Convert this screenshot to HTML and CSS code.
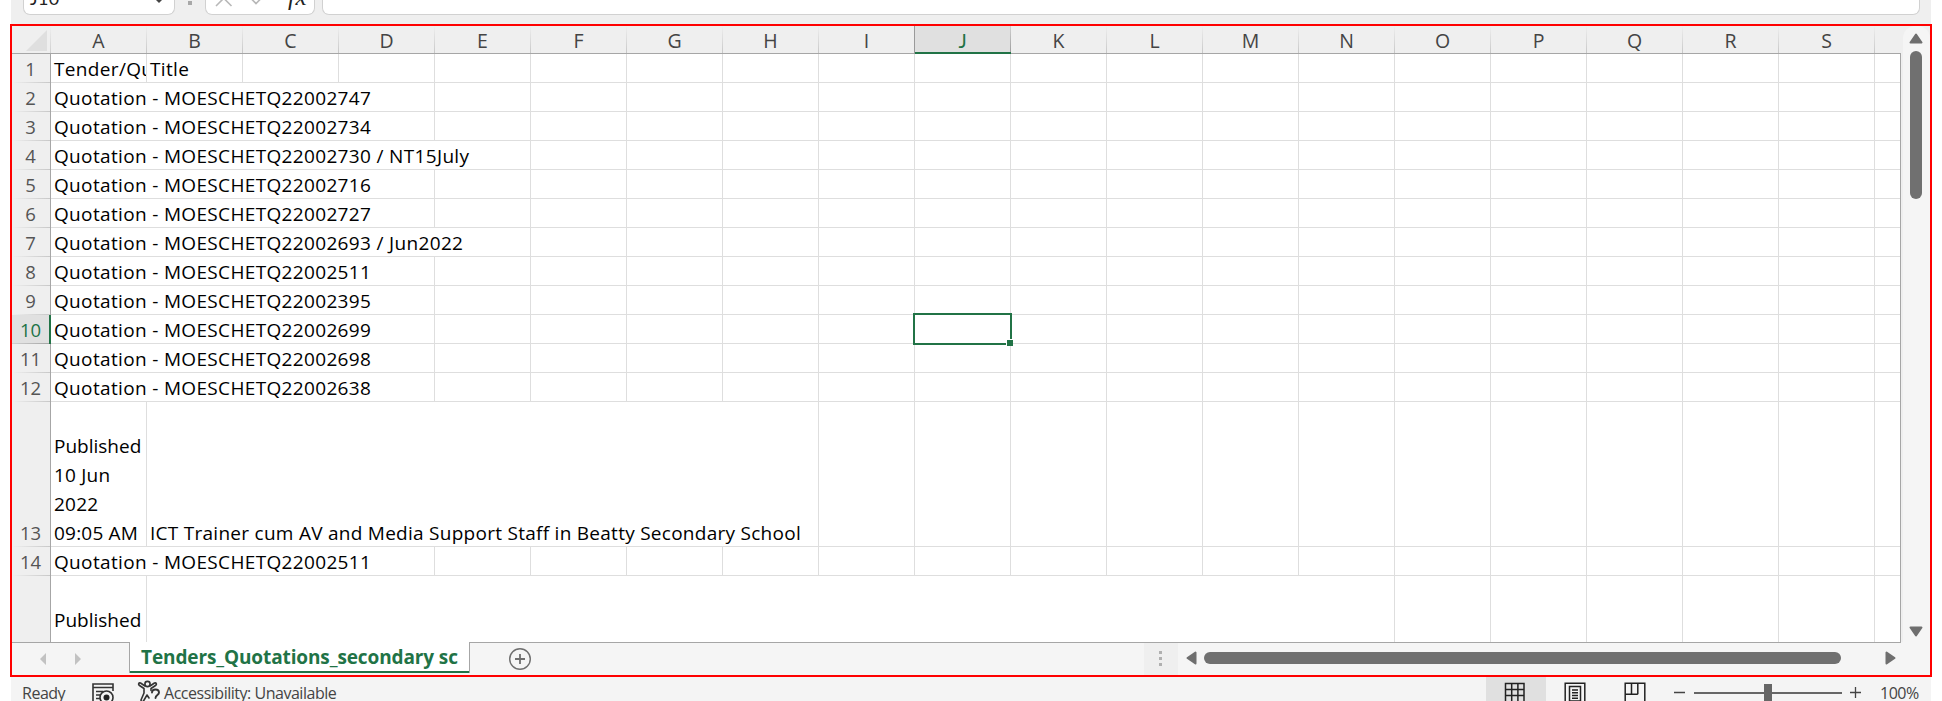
FILE: index.html
```
<!DOCTYPE html>
<html lang="en">
<head>
<meta charset="utf-8">
<title>Tenders_Quotations_secondary sc</title>
<link rel="stylesheet" href="styles.css">
</head>
<body>
<div class="toolbar">
  <div class="box namebox"><span>J10</span><svg class="caret" width="10" height="6" viewBox="0 0 10 6"><path d="M0 0h10L5 5z" fill="#444"/></svg></div>
  <div class="sep"></div>
  <div class="box fxbox">
    <svg width="110" height="14" viewBox="0 0 110 14"><path d="M10 6L26 -10M25.500 6L9.500 -10M43.500 -3l6.500 6.500l10 -10" fill="none" stroke="#b8b8b8" stroke-width="1.600"/></svg>
    <span class="fx">fx</span>
  </div>
  <div class="box formula"></div>
</div>

<div class="frame">
  <div class="main">
    <div class="sheet">
      <div class="row head">
        <div class="corner"><svg width="21" height="21" viewBox="0 0 21 21"><path d="M21 0v21H0z" fill="#dfdfdf"/></svg></div>
        <div class="col">A</div><div class="col">B</div><div class="col">C</div><div class="col">D</div><div class="col">E</div><div class="col">F</div><div class="col">G</div><div class="col">H</div><div class="col before">I</div><div class="col active">J</div><div class="col">K</div><div class="col">L</div><div class="col">M</div><div class="col">N</div><div class="col">O</div><div class="col">P</div><div class="col">Q</div><div class="col">R</div><div class="col">S</div>
      </div>
      <div class="body">
        <div class="row"><div class="num">1</div><div class="cell">Tender/Qu</div><div class="cell b">Title</div><div class="rest"></div></div>
        <div class="row"><div class="num">2</div><div class="cell s4">Quotation - MOESCHETQ22002747</div><div class="rest"></div></div>
        <div class="row"><div class="num">3</div><div class="cell s4">Quotation - MOESCHETQ22002734</div><div class="rest"></div></div>
        <div class="row"><div class="num">4</div><div class="cell s5">Quotation - MOESCHETQ22002730 / NT15July</div><div class="rest"></div></div>
        <div class="row"><div class="num">5</div><div class="cell s4">Quotation - MOESCHETQ22002716</div><div class="rest"></div></div>
        <div class="row"><div class="num">6</div><div class="cell s4">Quotation - MOESCHETQ22002727</div><div class="rest"></div></div>
        <div class="row"><div class="num">7</div><div class="cell s5">Quotation - MOESCHETQ22002693 / Jun2022</div><div class="rest"></div></div>
        <div class="row"><div class="num">8</div><div class="cell s4">Quotation - MOESCHETQ22002511</div><div class="rest"></div></div>
        <div class="row"><div class="num">9</div><div class="cell s4">Quotation - MOESCHETQ22002395</div><div class="rest"></div></div>
        <div class="row"><div class="num active">10</div><div class="cell s4">Quotation - MOESCHETQ22002699</div><div class="rest"></div></div>
        <div class="row"><div class="num">11</div><div class="cell s4">Quotation - MOESCHETQ22002698</div><div class="rest"></div></div>
        <div class="row"><div class="num">12</div><div class="cell s4">Quotation - MOESCHETQ22002638</div><div class="rest"></div></div>
        <div class="row tall"><div class="num">13</div><div class="cell wrap"><span class="pub">Published</span><br>10 Jun<br>2022<br>09:05 AM</div><div class="cell b s7 long">ICT Trainer cum AV and Media Support Staff in Beatty Secondary School</div><div class="rest"></div></div>
        <div class="row"><div class="num">14</div><div class="cell s4">Quotation - MOESCHETQ22002511</div><div class="rest"></div></div>
        <div class="row last"><div class="num"></div><div class="cell wrap"><br><span class="pub">Published</span></div><div class="cell s13"></div><div class="rest"></div></div>
        <div class="selection"><i></i></div>
      </div>
    </div>
    <div class="vscroll">
      <svg width="14" height="11" viewBox="0 0 14 11"><path d="M7 1.500L12.500 9.500H1.500z" fill="#6f6f6f" stroke="#6f6f6f" stroke-width="2" stroke-linejoin="round"/></svg>
      <div class="vthumb"></div>
      <svg width="14" height="11" viewBox="0 0 14 11"><path d="M7 9.500L12.500 1.500H1.500z" fill="#6f6f6f" stroke="#6f6f6f" stroke-width="2" stroke-linejoin="round"/></svg>
    </div>
  </div>
  <div class="tabs">
    <div class="nav"><svg width="42" height="12" viewBox="0 0 42 12"><path d="M6 0v12L0 6zM35 0v12l6 -6z" fill="#c2c2c2"/></svg></div>
    <div class="tab">Tenders_Quotations_secondary sc</div>
    <div class="fill"><svg width="24" height="24" viewBox="0 0 24 24" fill="none" stroke="#6f6f6f"><circle cx="12" cy="12" r="10.300" stroke-width="1.400"/><path d="M12 7v10M7 12h10" stroke-width="1.800"/></svg></div>
    <div class="split"><i></i><i></i><i></i></div>
    <div class="hscroll">
      <svg width="11" height="14" viewBox="0 0 11 14"><path d="M1.500 7L9.500 1.500v11z" fill="#6f6f6f" stroke="#6f6f6f" stroke-width="2" stroke-linejoin="round"/></svg>
      <div class="hthumb"></div>
      <svg width="11" height="14" viewBox="0 0 11 14"><path d="M9.500 7L1.500 1.500v11z" fill="#6f6f6f" stroke="#6f6f6f" stroke-width="2" stroke-linejoin="round"/></svg>
    </div>
  </div>
</div>

<div class="status">
  <span class="ready">Ready</span>
  <svg class="macro" width="24" height="24" viewBox="0 0 24 24" fill="none" stroke="#333" stroke-width="1.600"><path d="M9 22H2V2h20v7M2 5.500h20M5 9.500h7M5 13h4M5 16.500h4"/><circle cx="15.500" cy="15.500" r="6.500"/><circle cx="15.500" cy="15.500" r="3" fill="#222" stroke="none"/></svg>
  <svg class="acc" width="24" height="24" viewBox="0 0 24 24" fill="none" stroke="#333" stroke-width="1.600" stroke-linejoin="round" stroke-linecap="round"><circle cx="10.500" cy="4" r="2.600"/><path d="M8 6L3.500 3C1.500 2.500 1 4.500 2.500 5.500L7 8.500V13L4 20c0 2 2 2 2.500 1L10 15l2 3M13 6l4.500 -3c2 -.5 2.500 1.500 1 2.500L14 8.500v2"/><path d="M15 12.500c0 -4 7 -4 7 0c0 2.500 -3.500 2.500 -3.500 5.500" stroke-width="1.900"/></svg>
  <span class="acctext">Accessibility: Unavailable</span>
  <div class="view on"><svg width="22" height="22" viewBox="0 0 22 22" fill="none" stroke="#222" stroke-width="1.500"><path d="M1.500 1.500h18.500v19H1.500zM7.700 1.500v19M13.900 1.500v19M1.500 7.500h18.500M1.500 13.500h18.500"/></svg></div>
  <div class="view"><svg width="22" height="22" viewBox="0 0 22 22" fill="none" stroke="#222" stroke-width="1.500"><path d="M1.200 1.200h19.600v21H1.200zM5.500 4.500h11v14.500h-11zM8 8h6M8 10.800h6M8 13.600h6M8 16.200h6"/></svg></div>
  <div class="view"><svg width="22" height="22" viewBox="0 0 22 22" fill="none" stroke="#222" stroke-width="1.500"><path d="M1.200 1.200h19.600v21H1.200zM7.500 1.200v11M13.800 1.200v11M1.200 12.200h12.600"/></svg></div>
  <svg class="zoom" width="190" height="24" viewBox="0 0 190 24"><path d="M1 15.500h11M177 15.500h11M182.500 10v11" stroke="#444" stroke-width="1.300"/><path d="M21 16h148" stroke="#666" stroke-width="2"/><path d="M91 7h8v17h-8z" fill="#666"/></svg>
  <span class="pct">100%</span>
</div>
</body>
</html>
```
FILE: styles.css
```
* { box-sizing: border-box; }
body {
  margin: 0;
  width: 1942px;
  height: 701px;
  overflow: hidden;
  background: #fff;
  font-family: "Open Sans", "Noto Sans", sans-serif;
  display: flex;
  flex-direction: column;
}
svg { display: block; flex: none; }

.toolbar {
  flex: none;
  display: flex;
  height: 24px;
  margin: 0 11px;
  padding-left: 12px;
  background: #efefef;
}
.box {
  position: relative;
  height: 15px;
  background: #fff;
  border: 1px solid #d1d1d1;
  border-top: 0;
  border-radius: 0 0 7px 7px;
  overflow: hidden;
}
.namebox { width: 152px; display: flex; justify-content: space-between; padding: 0 10px 0 6px; }
.namebox span { margin-top: -14px; font: 18px/25px Lato, sans-serif; letter-spacing: 0.3px; color: #222; }
.caret { margin-top: -2px; }
.sep { width: 4px; height: 4px; margin: 1px 13px 0 13px; background: #a8a8a8; }
.fxbox { width: 110px; }
.fx {
  position: absolute;
  left: 82px;
  top: -18px;
  font: italic 25px/30px "Liberation Serif", serif;
  letter-spacing: 0.5px;
  color: #222;
}
.formula { width: 1598px; margin-left: 7px; }

.frame {
  flex: none;
  width: 1922px;
  height: 653px;
  margin-left: 10px;
  border: 2px solid #f00;
  background: #efefef;
  display: flex;
  flex-direction: column;
}
.main { display: flex; height: 616px; }
.sheet { width: 1889px; }
.row { display: flex; height: 29px; }
.head { height: 28px; border-bottom: 1px solid #a6a6a6; }
.corner { width: 39px; padding: 4px 0 0 14px; flex: none; background: linear-gradient(#efefef, #cfcfcf) right / 1px 100% no-repeat; }
.col {
  width: 96px;
  height: 27px;
  flex: none;
  padding-right: 1px;
  text-align: center;
  font-size: 19.5px;
  line-height: 30px;
  color: #444;
  background: linear-gradient(#efefef, #c8c8c8) right / 1px 100% no-repeat;
}
.col.before { background-image: linear-gradient(#d0d0d0, #9a9a9a); }
.col.active {
  height: 28px;
  font-family: Lato, sans-serif;
  color: #217346;
  background: linear-gradient(#d0d0d0, #9a9a9a) right / 1px 100% no-repeat, #e0e0e0;
  box-shadow: inset 0 -2px #217346, -1px 0 #9a9a9a;
}

.body {
  position: relative;
  height: 588px;
  background: #fff;
  border-right: 1px solid #a6a6a6;
}
.num {
  width: 39px;
  flex: none;
  padding-right: 1px;
  display: flex;
  justify-content: center;
  align-items: flex-end;
  font-size: 18.5px;
  line-height: 28px;
  color: #555;
  border-right: 1px solid #a6a6a6;
  background: linear-gradient(90deg, #efefef, #c8c8c8) bottom / 100% 1px no-repeat, #efefef;
}
.num.active {
  color: #217346;
  border-right: 2px solid #217346;
  padding-right: 0;
  background: linear-gradient(90deg, #d0d0d0, #a6a6a6) bottom / 100% 1px no-repeat, #e0e0e0;
}
.cell {
  width: 96px;
  flex: none;
  padding: 1px 0 0 3px;
  overflow: hidden;
  white-space: nowrap;
  font-size: 19px;
  line-height: 29px;
  letter-spacing: 0.34px;
  color: #000;
  border-right: 1px solid #dedede;
  border-bottom: 1px solid #dedede;
}
.s4 { width: 384px; }
.s5 { width: 480px; }
.s7 { width: 672px; }
.s13 { width: 1248px; }
.rest {
  flex: 1;
  border-bottom: 1px solid #dedede;
  background: repeating-linear-gradient(90deg, transparent 0 95px, #dedede 95px 96px);
}
.tall { height: 145px; }
.tall .wrap { padding-top: 30px; letter-spacing: 0.2px; }
.wrap .pub { letter-spacing: 0; }
.tall .long { padding-top: 117px; letter-spacing: 0.27px; }
.last { height: 66px; }
.last > * { border-bottom: 0; }
.last .num { background: #efefef; }
.selection {
  position: absolute;
  left: 901px;
  top: 259px;
  width: 99px;
  height: 32px;
  border: 2px solid #217346;
}
.selection i {
  position: absolute;
  right: -3px;
  bottom: -3px;
  width: 7px;
  height: 7px;
  background: #217346;
  border: 1px solid #fff;
  border-right: 0;
  border-bottom: 0;
}

.vscroll {
  width: 27px;
  margin-left: 2px;
  padding: 7px 1px 4px 0;
  display: flex;
  flex-direction: column;
  align-items: center;
  background: #f5f5f5;
  border-radius: 12px 12px 0 0;
}
.vthumb { width: 12px; height: 148px; margin: 7px 0 427px; border-radius: 6px; background: #707070; }

.tabs { display: flex; height: 33px; background: #f5f5f5; }
.nav { width: 117px; padding: 10px 0 0 28px; border-top: 1px solid #a6a6a6; }
.tab {
  width: 341px;
  height: 31px;
  padding-left: 11px;
  background: #fff;
  border: solid #a6a6a6;
  border-width: 0 1px;
  box-shadow: inset 0 -2px #217346;
  font-size: 19px;
  font-weight: 700;
  line-height: 31px;
  letter-spacing: -0.11px;
  white-space: nowrap;
  color: #217346;
}
.fill { width: 674px; padding: 4px 0 0 38px; border-top: 1px solid #a6a6a6; }
.split {
  width: 34px;
  padding: 8px 0 0 15px;
  display: flex;
  flex-direction: column;
  gap: 3px;
  background: #efefef;
  border-top: 1px solid #a6a6a6;
}
.split i { width: 3px; height: 3px; background: #b0b0b0; }
.hscroll {
  width: 723px;
  padding: 8px 4px 0 8px;
  display: flex;
  align-items: flex-start;
  border-top: 1px solid #a6a6a6;
}
.hthumb { width: 637px; height: 12px; margin: 1px 44px 0 7px; border-radius: 6px; background: #707070; }

.status {
  flex: none;
  height: 24px;
  width: 1920px;
  margin-left: 11px;
  display: flex;
  background: #f4f4f4;
  color: #444;
  font-size: 16px;
  line-height: 33px;
  letter-spacing: -0.48px;
  white-space: nowrap;
  overflow: hidden;
}
.ready { width: 80px; padding-left: 11px; }
.macro { margin-top: 5px; }
.acc { margin: 3px 0 0 22px; }
.acctext { width: 1325px; padding-left: 3px; }
.view { width: 60px; flex: none; padding: 5px 0 0 18px; }
.on { background: #e0e0e0; }
.zoom { margin-left: 7px; }
.pct { margin-left: 17px; }
```
